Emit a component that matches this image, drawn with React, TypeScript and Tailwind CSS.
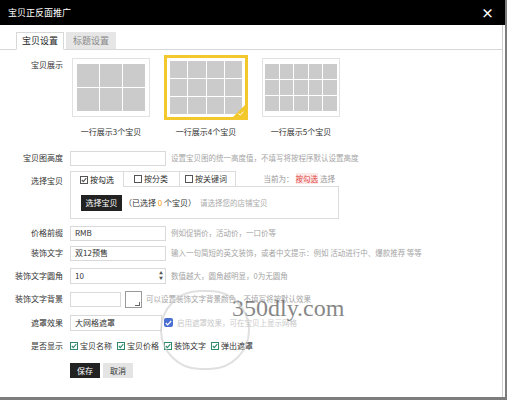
import React from "react";

const font = { fontFamily: '"Noto Sans CJK SC", "Noto Sans", sans-serif' };

function Check({ checked, color = "#555" }: { checked?: boolean; color?: string }) {
    return (
        <svg width="8" height="8" viewBox="0 0 8 8" className="shrink-0">
            <rect x="0.5" y="0.5" width="7" height="7" fill="white" stroke={color} strokeWidth="1" />
            {checked && <polyline points="1.8,4 3.3,5.6 6.3,2.2" fill="none" stroke={color} strokeWidth="1.1" />}
        </svg>
    );
}

function Thumb({ cols, rows, selected, caption }: { cols: number; rows: number; selected?: boolean; caption: string }) {
    const cells = Array.from({ length: cols * rows });
    const gridCls =
        cols === 3 ? "grid-cols-3 grid-rows-2" : cols === 4 ? "grid-cols-4 grid-rows-3" : "grid-cols-5 grid-rows-3";
    return (
        <div className="flex flex-col items-center">
            {selected ? (
                <div className="relative h-[65px] w-[84px] border-[3px] border-[#f2c82c] p-[3px]">
                    <div className={`grid h-full w-full gap-[1px] ${gridCls}`}>
                        {cells.map((_, i) => (
                            <div key={i} className="bg-[#cbcbcb]" />
                        ))}
                    </div>
                    <div className="absolute bottom-0 right-0 h-0 w-0 border-b-[12px] border-l-[12px] border-b-[#f2c82c] border-l-transparent" />
                    <svg className="absolute bottom-[1px] right-[1px]" width="6" height="5" viewBox="0 0 6 5">
                        <polyline points="0.5,2.5 2.2,4 5.5,0.8" fill="none" stroke="white" strokeWidth="1" />
                    </svg>
                </div>
            ) : (
                <div className={`h-[59px] w-[78px] border border-[#e2e2e2] ${cols === 3 ? "px-[4px] py-[5px]" : "px-[2px] py-[5px]"}`}>
                    <div className={`grid h-full w-full gap-[1px] ${gridCls}`}>
                        {cells.map((_, i) => (
                            <div key={i} className="bg-[#cbcbcb]" />
                        ))}
                    </div>
                </div>
            )}
            <div className={`${selected ? "mt-[7px]" : "mt-[10px]"} text-[8px] leading-[10px] text-[#333]`}>{caption}</div>
        </div>
    );
}

function Row({ label, h, children }: { label: string; h: string; children?: React.ReactNode }) {
    return (
        <div className={`flex items-center ${h}`}>
            <div className="w-[64px] shrink-0 pr-[1px] text-right text-[8px] text-[#333]">{label}</div>
            <div className="ml-[6px] flex items-center">{children}</div>
        </div>
    );
}

export default function App() {
    return (
        <div className="relative h-[400px] w-[507px] overflow-hidden bg-[#7d7d7d]" style={font}>
            <div className="h-[397px] w-[505px] bg-white">
                {/* title */}
                <div className="flex h-[25px] items-center justify-between bg-black pl-[8px] pr-[11px]">
                    <span className="text-[9px] text-white">宝贝正反面推广</span>
                    <span className="text-[13px] font-bold leading-none text-white">×</span>
                </div>
                <div className="h-[372px] w-[503px] border-r border-[#cfcfcf]">
                    {/* tabs */}
                    <div className="flex items-end gap-[2px] border-b border-[#d8d8d8] pl-[16px] pt-[7px]">
                        <div className="-mb-[1px] flex h-[18px] w-[48px] items-center justify-center border border-b-white border-[#d8d8d8] bg-white text-[9px] text-[#222]">
                            宝贝设置
                        </div>
                        <div className="flex h-[17px] w-[50px] items-center justify-center bg-[#e6e6e6] text-[9px] text-[#888]">
                            标题设置
                        </div>
                    </div>

                    {/* display */}
                    <div className="flex pt-[5px]">
                        <div className="w-[64px] shrink-0 pr-[1px] pt-[4px] text-right text-[8px] text-[#333]">宝贝展示</div>
                        <div className="ml-[8px] flex items-start gap-[14px]">
                            <div className="pt-[3px]">
                                <Thumb cols={3} rows={2} caption="一行展示3个宝贝" />
                            </div>
                            <Thumb cols={4} rows={3} selected caption="一行展示4个宝贝" />
                            <div className="pt-[3px]">
                                <Thumb cols={5} rows={3} caption="一行展示5个宝贝" />
                            </div>
                        </div>
                    </div>

                    <div className="mt-[12px]">
                        <Row label="宝贝图高度" h="h-[18px]">
                            <div className="h-[15px] w-[96px] border border-[#d9d9d9]" />
                            <span className="ml-[5px] text-[7.5px] text-[#a5a5a5]">设置宝贝图的统一高度值，不填写将按程序默认设置高度</span>
                        </Row>

                        {/* select items */}
                        <div className="mt-[4px] flex">
                            <div className="w-[64px] shrink-0 pr-[1px] pt-[4px] text-right text-[8px] text-[#333]">选择宝贝</div>
                            <div className="ml-[6px] w-[269px]">
                                <div className="flex h-[16px] items-stretch">
                                    <div className="flex w-[54px] items-center gap-[2px] border-l border-r border-t border-[#dcdcdc] pl-[9px] text-[8px] text-[#222]">
                                        <Check checked />
                                        按勾选
                                    </div>
                                    <div className="flex w-[56px] items-center gap-[2px] border-b border-r border-t border-[#dcdcdc] pl-[10px] text-[8px] text-[#333]">
                                        <Check />
                                        按分类
                                    </div>
                                    <div className="flex w-[56px] items-center gap-[2px] border-b border-r border-t border-[#dcdcdc] pl-[5px] text-[8px] text-[#333]">
                                        <Check />
                                        按关键词
                                    </div>
                                    <div className="flex flex-1 items-center justify-end border-b border-[#dcdcdc] pr-[4px] text-[7.5px] text-[#999]">
                                        当前为：<span className="mx-[2px] bg-[#fde8e8] text-[#e0443c]">按勾选</span>选择
                                    </div>
                                </div>
                                <div className="flex h-[32px] items-center border-b border-l border-r border-[#dcdcdc] pl-[10px]">
                                    <div className="flex h-[16px] w-[41px] items-center justify-center bg-[#222] text-[8px] text-white">选择宝贝</div>
                                    <span className="ml-[2px] text-[8px] text-[#333]">
                                        （已选择 <span className="text-[#f39800]">0</span> 个宝贝）
                                    </span>
                                    <span className="ml-[4px] text-[7.5px] text-[#aaa]">请选择您的店铺宝贝</span>
                                </div>
                            </div>
                        </div>

                        <div className="mt-[4px]">
                            <Row label="价格前缀" h="h-[20px]">
                                <div className="flex h-[15px] w-[96px] items-center border border-[#d9d9d9] pl-[4px] text-[8px] text-[#333]">RMB</div>
                                <span className="ml-[5px] text-[7.5px] text-[#a5a5a5]">例如促销价，活动价，一口价等</span>
                            </Row>
                            <Row label="装饰文字" h="h-[20px]">
                                <div className="flex h-[15px] w-[96px] items-center border border-[#d9d9d9] pl-[4px] text-[8px] text-[#333]">双12预售</div>
                                <span className="ml-[5px] text-[7.5px] text-[#a5a5a5]">输入一句简短的英文装饰，或者中文提示：例如 活动进行中、爆款推荐 等等</span>
                            </Row>
                            <Row label="装饰文字圆角" h="h-[25px]">
                                <div className="flex h-[16px] w-[96px] items-center justify-between border border-[#d9d9d9] pl-[4px] pr-[2px] text-[8px] text-[#333]">
                                    10
                                    <span className="flex flex-col text-[4px] leading-[5px] text-[#555]">
                                        <span>▲</span>
                                        <span>▼</span>
                                    </span>
                                </div>
                                <span className="ml-[5px] text-[7.5px] text-[#a5a5a5]">数值越大，圆角越明显，0为无圆角</span>
                            </Row>
                            <Row label="装饰文字背景" h="h-[22px]">
                                <div className="h-[15px] w-[51px] border border-[#d9d9d9]" />
                                <div className="relative ml-[4px] h-[17px] w-[17px] border border-[#9a9a9a] bg-white">
                                    <div className="absolute bottom-[1px] right-[1px] h-[4px] w-[5px] border-b border-r border-[#666]" />
                                </div>
                                <span className="ml-[4px] text-[7.5px] text-[#a5a5a5]">可以设置装饰文字背景颜色，不填写将按默认效果</span>
                            </Row>
                            <Row label="遮罩效果" h="h-[25px]">
                                <div className="flex h-[16px] w-[92px] items-center border border-[#d9d9d9] pl-[4px] text-[8px] text-[#333]">大网格遮罩</div>
                                <div className="ml-[2px] flex h-[9px] w-[9px] items-center justify-center rounded-[2px] bg-[#4a6fd0]">
                                    <svg width="7" height="6" viewBox="0 0 7 6">
                                        <polyline points="0.8,3 2.6,4.8 6.2,1" fill="none" stroke="white" strokeWidth="1.2" />
                                    </svg>
                                </div>
                                <span className="ml-[4px] text-[7.5px] text-[#c8c8c8]">启用遮罩效果，可在宝贝上显示网格</span>
                            </Row>
                            <Row label="是否显示" h="h-[22px]">
                                <div className="flex items-center gap-[5px] text-[8px] text-[#333]">
                                    <span className="flex items-center gap-[2px]">
                                        <Check checked color="#2f8a6e" />
                                        宝贝名称
                                    </span>
                                    <span className="flex items-center gap-[2px]">
                                        <Check checked color="#2f8a6e" />
                                        宝贝价格
                                    </span>
                                    <span className="flex items-center gap-[2px]">
                                        <Check checked color="#2f8a6e" />
                                        装饰文字
                                    </span>
                                    <span className="flex items-center gap-[2px]">
                                        <Check checked color="#2f8a6e" />
                                        弹出遮罩
                                    </span>
                                </div>
                            </Row>
                            <div className="ml-[70px] mt-[6px] flex gap-[3px]">
                                <div className="flex h-[15px] w-[30px] items-center justify-center bg-[#222] text-[8px] text-white">保存</div>
                                <div className="flex h-[15px] w-[30px] items-center justify-center bg-[#e4e4e4] text-[8px] text-[#333]">取消</div>
                            </div>
                        </div>
                    </div>
                </div>
            </div>

            {/* watermark */}
            <div
                className="pointer-events-none absolute left-[232px] top-[296px] text-[24px] leading-none text-[#555] opacity-70"
                style={{ fontFamily: '"Liberation Serif", serif' }}
            >
                350dly.com
            </div>
            <div className="pointer-events-none absolute left-[160px] top-[290px] h-[80px] w-[90px] rounded-full border-2 border-[#ccc] opacity-60" />
        </div>
    );
}
